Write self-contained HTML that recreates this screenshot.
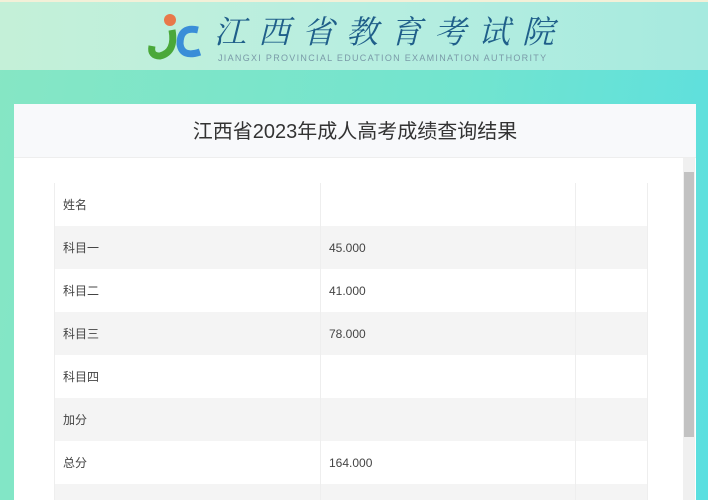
<!DOCTYPE html><html><head><meta charset="utf-8"><style>
html,body{margin:0;width:708px;height:500px;overflow:hidden}
body{font-family:"Liberation Sans","Noto Sans CJK SC",sans-serif;background:linear-gradient(100deg,#86e6c4,#72e4cf 60%,#5adfe0);position:relative}
.hd{position:absolute;left:0;top:0;width:708px;height:70px;background:linear-gradient(90deg,#c4f0d8,#b8eee0 50%,#a6eadf);border-top:2px solid #f3f0d8;box-sizing:border-box}
.logo{position:absolute;left:214px;top:8px;font-family:"Noto Serif CJK SC",serif;font-size:32px;color:#1f5f8a;letter-spacing:12px;font-style:italic;line-height:40px}
.en{position:absolute;left:218px;top:51px;font-size:9px;color:#7a9aa8;letter-spacing:1.3px}
.panel{position:absolute;left:14px;top:104px;width:682px;height:396px;background:#fff;overflow:hidden}
.tt{height:53px;background:#f8f9fb;border-bottom:1px solid #eee;text-align:center;font-size:20px;line-height:56px;color:#333}
.tw{position:absolute;left:40px;top:79px;width:594px;height:317px;overflow:hidden}
table{width:594px;border-collapse:collapse;font-size:12px;color:#444}
td{height:43px;border-left:1px solid #eee;border-right:1px solid #eee;padding:0 8px;box-sizing:border-box}
tr:nth-child(even) td{background:#f4f4f4}
tr.last td{height:16px}
.sb{position:absolute;left:669px;top:54px;width:12px;height:342px;background:#f0f0f0}
.th{position:absolute;left:1px;top:14px;width:10px;height:265px;background:#c2c2c2}
</style></head><body>
<div class="hd">
<svg style="position:absolute;left:146px;top:10px" width="60" height="52"><circle cx="24" cy="8" r="6" fill="#e8784a"/><path d="M26 18 Q30 40 14 44 Q4 44 6 34" stroke="#4aa83a" stroke-width="7" fill="none"/><path d="M52 18 Q34 14 34 32 Q36 46 54 40" stroke="#3a8ed8" stroke-width="7" fill="none"/></svg>
<div class="logo">江西省教育考试院</div>
<div class="en">JIANGXI PROVINCIAL EDUCATION EXAMINATION AUTHORITY</div>
</div>
<div class="panel">
<div class="tt">江西省2023年成人高考成绩查询结果</div>
<div class="tw"><table>
<tr><td style="width:266px">姓名</td><td style="width:255px"></td><td></td></tr>
<tr><td>科目一</td><td>45.000</td><td></td></tr>
<tr><td>科目二</td><td>41.000</td><td></td></tr>
<tr><td>科目三</td><td>78.000</td><td></td></tr>
<tr><td>科目四</td><td></td><td></td></tr>
<tr><td>加分</td><td></td><td></td></tr>
<tr><td>总分</td><td>164.000</td><td></td></tr>
<tr class="last"><td></td><td></td><td></td></tr>
</table></div>
<div class="sb"><div class="th"></div></div>
</div>
</body></html>
